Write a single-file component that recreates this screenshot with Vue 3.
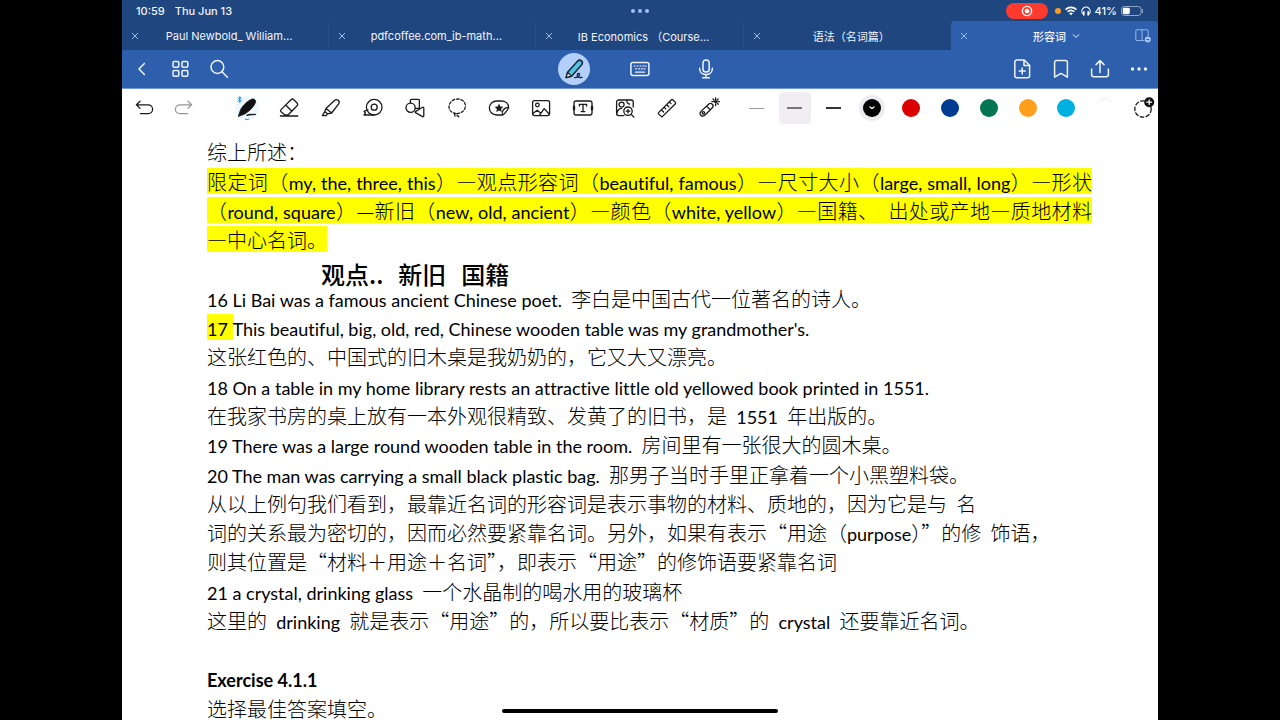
<script setup>
import { ref } from 'vue'

const tabs = [
  { title: 'Paul Newbold_ William…' },
  { title: 'pdfcoffee.com_ib-math…' },
  { title: 'IB Economics （Course…' },
  { title: '语法（名词篇）' },
  { title: '形容词', active: true },
]

const tools = [
  { id: 'pen', label: 'Pen' },
  { id: 'eraser', label: 'Eraser' },
  { id: 'marker', label: 'Highlighter' },
  { id: 'tape', label: 'Tape' },
  { id: 'shapes', label: 'Shapes' },
  { id: 'lasso', label: 'Lasso' },
  { id: 'sticker', label: 'Elements' },
  { id: 'image', label: 'Image' },
  { id: 'text', label: 'Text' },
  { id: 'magnify', label: 'Zoom window' },
  { id: 'ruler', label: 'Ruler' },
  { id: 'laser', label: 'Laser pointer' },
]

const widths = ['thin', 'medium', 'thick']
const width = ref('medium')
const colours = ['black', 'red', 'navy', 'green', 'orange', 'cyan', 'white']
const colour = ref('black')

const blocks = [
  [{ t: '综上所述：' }],
  [
    { full: true, mark: '限定词（my, the, three, this）—观点形容词（beautiful, famous）—尺寸大小（large, small, long）—形状' },
    { full: true, mark: '（round, square）—新旧（new, old, ancient）—颜色（white, yellow）—国籍、  出处或产地—质地材料' },
    { mark: '—中心名词。' },
    { ink: ['观点..', '新旧', '国籍'] },
  ],
  [
    { t: '16 Li Bai was a famous ancient Chinese poet.  李白是中国古代一位著名的诗人。' },
    { mark: '17 ', t: "This beautiful, big, old, red, Chinese wooden table was my grandmother's." },
    { t: '这张红色的、中国式的旧木桌是我奶奶的，它又大又漂亮。' },
  ],
  [
    { t: '18 On a table in my home library rests an attractive little old yellowed book printed in 1551.' },
    { t: '在我家书房的桌上放有一本外观很精致、发黄了的旧书，是  1551  年出版的。' },
    { t: '19 There was a large round wooden table in the room.  房间里有一张很大的圆木桌。' },
  ],
  [
    { t: '20 The man was carrying a small black plastic bag.  那男子当时手里正拿着一个小黑塑料袋。' },
    { t: '从以上例句我们看到，最靠近名词的形容词是表示事物的材料、质地的，因为它是与  名' },
    { t: '词的关系最为密切的，因而必然要紧靠名词。另外，如果有表示“用途（purpose）”的修  饰语，' },
    { t: '则其位置是“材料＋用途＋名词”，即表示“用途”的修饰语要紧靠名词' },
  ],
  [
    { t: '21 a crystal, drinking glass  一个水晶制的喝水用的玻璃杯' },
    { t: '这里的  drinking  就是表示“用途”的，所以要比表示“材质”的  crystal  还要靠近名词。' },
    { t: '' },
    { t: 'Exercise 4.1.1', bold: true },
  ],
  [{ t: '选择最佳答案填空。' }],
]

// Splits a line into Latin and Chinese runs so each gets its own typeface.
function runs(s) {
  return (s || '').match(/[\x20-\x7e]+|[^\x20-\x7e]+/g)?.map((text) => ({
    text,
    latin: /^[\x20-\x7e]/.test(text),
  })) ?? []
}
</script>

<template>
  <div class="screen" lang="zh-CN">
    <div class="tablet">
      <header class="status">
        <div class="clock"><span>10:59</span><span>Thu Jun 13</span></div>
        <div class="dots"><i></i><i></i><i></i></div>
        <div class="indicators">
          <span class="rec">
            <svg width="12" height="12" viewBox="0 0 12 12" fill="none" stroke="#fff"><circle cx="6" cy="6" r="4.6" stroke-width="1.4" /><circle cx="6" cy="6" r="2.3" fill="#fff" stroke="none" /></svg>
          </span>
          <i class="mic-dot"></i>
          <svg width="12" height="10" viewBox="0 0 12 10" fill="none" stroke="#fff" stroke-width="1.6"><path d="M.6 3.6a7.6 7.6 0 0 1 10.8 0M2.6 5.8a4.8 4.8 0 0 1 6.8 0" /><path d="M4.2 7.4a2.6 2.6 0 0 1 3.6 0L6 9.3z" fill="#fff" stroke="none" /></svg>
          <svg width="10" height="10" viewBox="0 0 10 10" fill="none" stroke="#fff" stroke-width="1.1"><path d="M2 8.2A4.2 4.2 0 1 1 8 8.2" /><path d="M2.8 5.8v3M7.2 5.8v3" stroke-width="1.7" stroke-linecap="round" /></svg>
          <span class="percent">41%</span>
          <svg width="23" height="10" viewBox="0 0 23 10" fill="none"><rect x=".5" y=".5" width="19.5" height="9" rx="2.8" stroke="#8fa7cb" /><rect x="1.8" y="1.8" width="7" height="6.4" rx="1.4" fill="#fff" /><path d="M21.4 3.4v3.2" stroke="#8fa7cb" stroke-width="1.2" stroke-linecap="round" /></svg>
        </div>
      </header>

      <nav class="tabs">
        <div v-for="tab in tabs" :key="tab.title" class="tab" :class="{ active: tab.active }">
          <button class="close" aria-label="Close tab">
            <svg width="8" height="8" viewBox="0 0 8 8" stroke="currentColor" stroke-width="1"><path d="M1 1l6 6M7 1L1 7" /></svg>
          </button>
          <button class="title">
            {{ tab.title }}
            <svg v-if="tab.active" width="8" height="6" viewBox="0 0 8 6" fill="none" stroke="currentColor"><path d="M1 1.4l3 3 3-3" /></svg>
          </button>
          <button v-if="tab.active" class="split" aria-label="Split view">
            <svg width="16" height="14" viewBox="0 0 16 14" fill="none" stroke="#8fb2ea" stroke-width="1.1"><path d="M9.5 11.5H2.2A1.4 1.4 0 0 1 .8 10V2.2A1.4 1.4 0 0 1 2.2.8h9.6a1.4 1.4 0 0 1 1.4 1.4V7M7 .8v10.7" /><circle cx="12.8" cy="10.6" r="3" fill="#a9c6f5" stroke="none" /><path d="M11.3 10.6h3" stroke="#2d5fae" /></svg>
          </button>
        </div>
      </nav>

      <div class="bar">
        <div class="group">
          <button aria-label="Back"><svg width="20" height="20" viewBox="0 0 20 20"><path d="M12.4 4.5L7 10l5.4 5.5" /></svg></button>
          <button aria-label="Pages"><svg width="20" height="20" viewBox="0 0 20 20"><rect x="2" y="2.5" width="5.8" height="5.8" rx="1.2" /><rect x="11" y="2.5" width="5.8" height="5.8" rx="1.2" /><rect x="2" y="11.5" width="5.8" height="5.8" rx="1.2" /><rect x="11" y="11.5" width="5.8" height="5.8" rx="1.2" /></svg></button>
          <button aria-label="Search"><svg width="20" height="20" viewBox="0 0 20 20"><circle cx="7.4" cy="8" r="6.4" /><path d="M12 12.8l5.4 5.4" /></svg></button>
        </div>
        <div class="group wide">
          <button aria-label="Write" class="write">
            <svg width="32" height="32" viewBox="0 0 32 32">
              <path d="M8.1 24.6l1.5-5.4L19.5 8.2c1.2-1.3 2.8-1.3 4-.3s1.2 2.5.2 3.9L13.6 23.2z" fill="#54c4dc" stroke="#10253f" stroke-width="1.5" />
              <path d="M9.6 19.2l4 4-5.500 1.400z" fill="#f2d9b8" stroke="#10253f" stroke-width="1.2" />
              <path d="M16.6 24.6c2.7.2 5.400-2 4.900-3.600-.5-1.200-2.600-.4-2.300 1.500.2 1.600 1.700 2.300 4.900 1.900" stroke="#10253f" stroke-width="1.3" />
            </svg>
          </button>
          <button aria-label="Keyboard"><svg width="20" height="16" viewBox="0 0 20 16"><rect x=".9" y="1.4" width="18" height="13" rx="2" /><path d="M4 5h1M7 5h1M10 5h1M12.8 5h1M15.2 5h1M5.5 7.8h1M8.5 7.8h1M11.3 7.8h1M14 7.8h1M5.5 11.2h9" stroke-width="1.2" /></svg></button>
          <button aria-label="Record audio"><svg width="16" height="20" viewBox="0 0 16 20"><rect x="5" y="1" width="6.2" height="12" rx="3.1" /><path d="M1.6 9.2c0 4 2.8 6.4 6.4 6.4s6.4-2.4 6.4-6.4M8 15.6v3M4.6 18.8h6.8" /></svg></button>
        </div>
        <div class="group end">
          <button aria-label="Add page"><svg width="18" height="20" viewBox="0 0 18 20"><path d="M3.8 1h7.4l5.4 5.2v10.6a2 2 0 0 1-2 2H3.8a2 2 0 0 1-2-2V3a2 2 0 0 1 2-2zM11 1.2v5.2h5.4M9.2 9v6M6.2 12h6" /></svg></button>
          <button aria-label="Bookmark"><svg width="16" height="20" viewBox="0 0 16 20"><path d="M1.6 18.2V3.4a2 2 0 0 1 2-2h8.8a2 2 0 0 1 2 2v14.8L8 14.4z" /></svg></button>
          <button aria-label="Share"><svg width="20" height="20" viewBox="0 0 20 20"><path d="M1.6 10v5.6a2.2 2.2 0 0 0 2.2 2.2h12.4a2.2 2.2 0 0 0 2.2-2.2V10M10 13.4V2M6 5.6l4-4 4 4" /></svg></button>
          <button aria-label="More"><svg width="18" height="6" viewBox="0 0 18 6"><g fill="#eef4ff" stroke="none"><circle cx="2.5" cy="3" r="1.7" /><circle cx="9" cy="3" r="1.7" /><circle cx="15.5" cy="3" r="1.7" /></g></svg></button>
        </div>
      </div>

      <div class="toolbar">
        <div class="history">
          <button aria-label="Undo"><svg width="20" height="16" viewBox="0 0 20 16"><path d="M5 1.2L1.4 4.8 5 8.4M1.6 4.8h11.6a4.3 4.3 0 0 1 0 8.8H5.4" /></svg></button>
          <button aria-label="Redo" class="off"><svg width="20" height="16" viewBox="0 0 20 16"><path d="M15 1.2l3.6 3.6L15 8.4M18.4 4.8H6.8a4.3 4.3 0 0 0 0 8.8h7.8" /></svg></button>
        </div>

        <div class="tools">
          <button v-for="tool in tools" :key="tool.id" :aria-label="tool.label" :class="tool.id">
            <svg width="24" height="24" viewBox="0 0 24 24">
              <template v-if="tool.id === 'pen'">
                <circle cx="12" cy="12" r="12" fill="#eef8fe" stroke="none" />
                <path d="M3.4 20.2l2.2-6.6C8.5 8.5 13 4.5 17 3.2c2.6-.7 4.2 1 3.3 3.6-1.3 3.6-5.8 8.6-10.7 11.2z" fill="#111" stroke="#111" stroke-width=".8" />
                <path d="M12 19.4c2-1.4 5.2-.6 8.4-1" />
                <path d="M2.8 1.8l3.6 3.2-1.8 1.6V.4l1.8 1.6-3.6 3.2" stroke="#2a8ee0" stroke-width=".9" />
                <path d="M10.2 23l1.8.8 1.8-.8" stroke="#2a8ee0" stroke-width="1" />
              </template>
              <template v-else-if="tool.id === 'eraser'">
                <path d="M4 13.6L14 3.7a2 2 0 0 1 2.8 0l3.3 3.3a2 2 0 0 1 0 2.8L11 19H8l-4-3.2a1.6 1.6 0 0 1 0-2.2zM8.7 9l6.2 6.2M3.4 20h17.4" />
              </template>
              <template v-else-if="tool.id === 'marker'">
                <path d="M7 12.4l8.4-7.800c1.300-1.200 2.600-1.300 3.800-.3s1.300 2.400.3 3.800L12.600 17l-4.200.8-2.600-2.200zM6 15.400l-2.600 4.200h3.800l1.400-2M7 12.400l5.400 4.400" />
              </template>
              <template v-else-if="tool.id === 'tape'">
                <circle cx="13.2" cy="11.2" r="7.8" /><circle cx="13.2" cy="11.2" r="3" />
                <path d="M13 19H3l1.500-1.800L3 15.400l4-1.600" />
              </template>
              <template v-else-if="tool.id === 'shapes'">
                <path d="M7.4 7V4.400a1 1 0 0 1 1-1h7a1 1 0 0 1 1 1v7a1 1 0 0 1-1 1h-3" /><circle cx="7.6" cy="11.8" r="4.6" /><path d="M12.4 15.600l7.200-4.400a.8.800 0 0 1 1.200.7v8a.8.800 0 0 1-1.200.7l-7.200-4a.6.600 0 0 1 0-1z" />
              </template>
              <template v-else-if="tool.id === 'lasso'">
                <path d="M11 17.600c-4.400-.5-7.200-3.400-7-7C4.200 6.300 8 3 12.400 3s8 2.800 8 6.800c0 4.200-3.700 7.600-8.400 7.900a1.500 1.500 0 1 0 .4 1.600l1.400 1.600" stroke-dasharray="2.6 1.9" />
              </template>
              <template v-else-if="tool.id === 'sticker'">
                <path d="M15.600 19H9.800C5.600 19 2.400 16.200 2.400 12S5.600 5 9.800 5h4.400c4.200 0 7.400 2.400 7.400 6.400 0 1.300-4.600 7.600-6 7.600zM15.600 19c-1.200-3 .6-7.400 6-7.600" />
                <path d="M12 7.600l1.300 2.800 3 .4-2.200 2.100.6 3-2.700-1.500-2.700 1.500.6-3-2.200-2.100 3-.4z" fill="#1a1a1a" stroke="none" />
              </template>
              <template v-else-if="tool.id === 'image'">
                <rect x="3.6" y="4.6" width="17" height="15" rx="2" /><circle cx="8.4" cy="9" r="1.8" /><path d="M3.8 17.600l4.400-3.400 3.600 3M10.400 19.400l4.800-6.800 5.200 5.600" />
              </template>
              <template v-else-if="tool.id === 'text'">
                <rect x="3" y="5" width="18" height="14" rx="2" /><path d="M8.4 10V8.4h7.2V10M12 8.4v7.200M10.200 15.600h3.600" /><path d="M3 10.800v2.400M21 10.800v2.400" stroke-width="2.4" />
              </template>
              <template v-else-if="tool.id === 'magnify'">
                <path d="M11 19.600H5.600a2 2 0 0 1-2-2V6a2 2 0 0 1 2-2h12.600a2 2 0 0 1 2 2v5M4 17c.6-3 2-4.400 4.600-4.600" /><circle cx="8.6" cy="8.6" r="2.5" /><path d="M14 4.200c-.4 2.400.6 3.700 2.600 4" /><circle cx="15" cy="15.2" r="4.2" /><path d="M18.200 18.400l2.600 2.600M15 13.400V17M13.200 15.200h3.600" />
              </template>
              <template v-else-if="tool.id === 'ruler'">
                <path d="M3.600 16.600L16.400 3.800a1 1 0 0 1 1.400 0l2.600 2.600a1 1 0 0 1 0 1.400L7.600 20.400a1 1 0 0 1-1.400 0l-2.600-2.500a1 1 0 0 1 0-1.300zM6.600 14l2 2M9.200 11.300l1.600 1.600M11.800 8.700l2 2M14.400 6l1.600 1.600" />
              </template>
              <template v-else>
                <path d="M4 15.400l7.600-7.200c1.200-1 2.600-1 3.700 0s1 2.500 0 3.600L7.800 19.200c-1.200 1.100-2.900 1.100-4 0s-1-2.700.2-3.800zM9.600 10.200l3.800 3.700" /><circle cx="6.4" cy="16.8" r="1.2" />
                <path d="M18.600 1.800v1.600M18.600 8v1.600M14.800 5.600h1.600M20.800 5.600h1.600M16 3l1 1M21.200 3l-1 1M21.200 8.200l-1-1" /><circle cx="18.6" cy="5.6" r="1" fill="#1a1a1a" />
              </template>
            </svg>
          </button>
        </div>

        <div class="presets">
          <button v-for="w in widths" :key="w" :aria-label="w + ' stroke'" class="stroke" :class="[w, { on: w === width }]" @click="width = w"><i></i></button>
          <button v-for="c in colours" :key="c" :aria-label="c + ' ink'" class="swatch" :class="[c, { on: c === colour }]" @click="colour = c">
            <i><svg v-if="c === colour" width="6" height="4" viewBox="0 0 6 4"><path d="M1 1l2 1.6L5 1" stroke="#fff" /></svg></i>
          </button>
          <button class="add" aria-label="Add colour">
            <svg width="24" height="24" viewBox="0 0 24 24"><circle cx="12" cy="13" r="8.2" stroke-dasharray="3.6 2.4" /><circle cx="18.2" cy="6.2" r="5" fill="#111" stroke="none" /><path d="M18.2 3.8v4.8M15.8 6.200h4.800" stroke="#fff" stroke-width="1.2" /></svg>
          </button>
        </div>
      </div>

      <main class="page">
        <section v-for="(block, b) in blocks" :key="b" class="block">
          <p v-for="(line, l) in block" :key="l" :class="{ bold: line.bold }">
            <mark v-if="line.mark" :class="{ full: line.full }"><span v-for="(r, i) in runs(line.mark)" :key="i" :class="{ latin: r.latin }">{{ r.text }}</span></mark><span v-for="(r, i) in runs(line.t)" :key="i" :class="{ latin: r.latin }">{{ r.text }}</span>
            <span v-if="line.ink" class="ink"><span v-for="word in line.ink" :key="word">{{ word }}</span></span>
          </p>
        </section>
      </main>
      <div class="home"></div>
    </div>
  </div>
</template>

<style>
body {
  margin: 0;
  background: #000;
}
</style>

<style scoped>
.screen {
  height: 100vh;
  padding: 0 122px;
  background: #000;
  overflow: hidden;
  box-sizing: border-box;
}
.tablet {
  position: relative;
  height: 100%;
  display: flex;
  flex-direction: column;
  background: #fff;
  overflow: hidden;
  font-family: Inter, 'Noto Sans CJK SC', sans-serif;
}
button {
  display: flex;
  align-items: center;
  justify-content: center;
  border: 0;
  padding: 0;
  margin: 0;
  background: none;
  color: inherit;
  font: inherit;
}
svg {
  display: block;
  flex: none;
  overflow: visible;
}
.status {
  display: grid;
  grid-template-columns: 1fr auto 1fr;
  align-items: center;
  height: 21px;
  flex: none;
  background: #20467f;
  color: #f1f5fc;
  font-size: 11px;
  font-weight: 500;
  line-height: 12px;
}
.clock {
  display: flex;
  gap: 10px;
  padding-left: 14px;
}
.dots {
  display: flex;
  gap: 3px;
}
.dots i {
  width: 4px;
  height: 4px;
  border-radius: 50%;
  background: #9dc0f5;
}
.indicators {
  display: flex;
  align-items: center;
  justify-content: flex-end;
  gap: 4px;
  padding-right: 14px;
}
.rec {
  display: grid;
  place-items: center;
  width: 42px;
  height: 16px;
  margin-right: 3px;
  border-radius: 8px;
  background: #ff3b30;
}
.mic-dot {
  width: 6px;
  height: 6px;
  border-radius: 50%;
  background: #f59a23;
}
.tabs {
  display: grid;
  grid-template-columns: repeat(5, 1fr);
  height: 29px;
  flex: none;
  background: #20467f;
  color: #f1f5fc;
  font-size: 11px;
  font-weight: 400;
}
.tab {
  display: grid;
  grid-template-columns: 26px 1fr 18px;
  align-items: center;
  border-right: 1px solid #294f88;
}
.tab:nth-child(n + 4) {
  border-right: 0;
}
.tab.active {
  grid-template-columns: 26px 1fr 22px;
  background: #2d5fac;
  border-radius: 4px 4px 0 0;
  font-weight: 500;
}
.close {
  color: #9dbbe8;
}
.title {
  gap: 6px;
  white-space: nowrap;
}
.split {
  padding-right: 8px;
}
.bar {
  display: grid;
  grid-template-columns: 1fr auto 1fr;
  align-items: center;
  height: 38px;
  flex: none;
  background: #2d5fac;
  border-bottom: 1px solid #6f9ada;
}
.bar svg {
  fill: none;
  stroke: #eef4ff;
  stroke-width: 1.5;
  stroke-linecap: round;
  stroke-linejoin: round;
}
.group {
  display: flex;
}
.group button {
  width: 39px;
  height: 32px;
}
.group.wide button {
  width: 32px;
  margin: 0 17px;
}
.end {
  justify-content: flex-end;
}
.write {
  border-radius: 50%;
  background: #b3cffa;
}
.toolbar {
  display: flex;
  align-items: center;
  height: 38px;
  flex: none;
}
.toolbar svg {
  fill: none;
  stroke: #1a1a1a;
  stroke-width: 1.3;
  stroke-linecap: round;
  stroke-linejoin: round;
}
.history {
  display: flex;
  padding: 0 24px 0 4px;
}
.history button {
  width: 38px;
  height: 32px;
}
.off {
  opacity: 0.45;
}
.tools {
  display: flex;
}
.tools button {
  width: 42px;
  height: 32px;
}
.presets {
  display: flex;
  flex: 1;
  justify-content: space-between;
  padding-left: 10px;
}
.presets button {
  width: 32px;
  height: 32px;
}
.presets .add {
  width: 30px;
}
.stroke.on {
  border-radius: 4px;
  background: #f0eef2;
}
.stroke i {
  width: 15px;
  height: 1px;
  background: #999;
}
.medium i {
  background: #77757a;
  height: 2px;
}
.thick i {
  height: 2px;
  background: #333;
}
.swatch i {
  display: grid;
  place-items: center;
  width: 18px;
  height: 18px;
  border-radius: 50%;
}
.swatch.on i {
  box-shadow: 0 0 0 4px #ecebee;
}
.black i { background: #000; }
.red i { background: #dc0000; }
.navy i { background: #003c91; }
.green i { background: #057554; }
.orange i { background: #ff9f1c; }
.cyan i { background: #00b0df; }
.white i {
  background: #fff;
  box-shadow: 0 -1px 0 #eee;
}
.page {
  display: flex;
  flex-direction: column;
  gap: 1px;
  flex: 1;
  min-height: 0;
  padding: 10px 66px 0 85px;
  color: #000;
  font-family: 'Noto Sans CJK SC', sans-serif;
  font-size: 20px;
  font-weight: 300;
}
.block {
  flex: none;
}
p {
  position: relative;
  height: 29px;
  margin: 0;
  line-height: 29px;
  white-space: nowrap;
}
p > span,
mark > span {
  white-space: pre;
}
.latin {
  font-family: Lato, sans-serif;
  font-size: 18px;
  font-weight: 400;
  font-variant-ligatures: none;
}
.bold .latin {
  font-weight: 700;
}
mark {
  display: inline-block;
  height: 26px;
  margin-top: 1px;
  line-height: 27px;
  background: #ff0;
  color: inherit;
  vertical-align: top;
}
mark.full {
  width: 100%;
  white-space: pre-wrap;
  text-align: justify;
  text-align-last: justify;
}
mark.full > span {
  white-space: pre-wrap;
}
.ink {
  position: absolute;
  top: 5px;
  left: 114px;
  display: flex;
  gap: 15px;
  font-size: 24px;
  font-weight: 500;
}
.home {
  position: absolute;
  left: 50%;
  bottom: 7px;
  width: 276px;
  height: 4px;
  margin-left: -138px;
  border-radius: 2px;
  background: #000;
}
</style>
